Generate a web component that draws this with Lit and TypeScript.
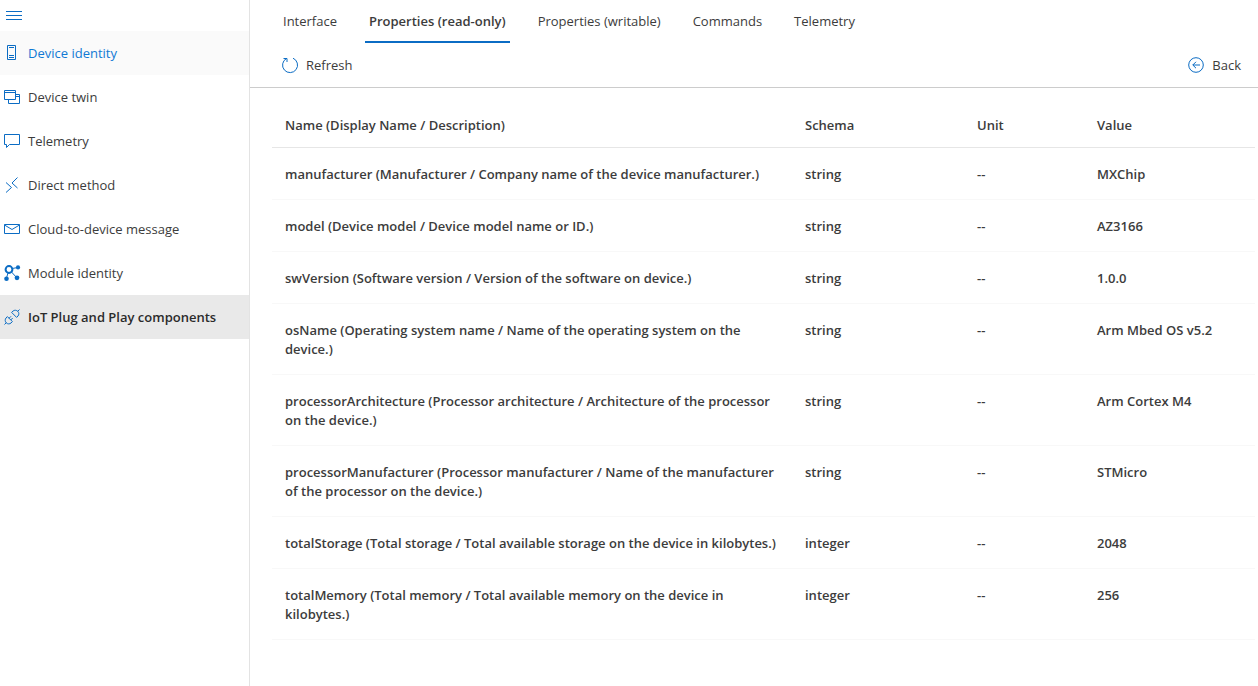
import { LitElement, html, css, svg, TemplateResult } from "lit";
import { customElement, property, state } from "lit/decorators.js";
import { classMap } from "lit/directives/class-map.js";

const icons: Record<string, TemplateResult> = {
  menu: svg`<path d="M0 3.5H16M0 7.5H16M0 11.5H16" />`,
  device: svg`<path d="M3.5 .5H11.5V14.5H3.5ZM5 2.5H10M5 10.5H10M5 12.5H10" />`,
  twin: svg`<path d="M.5 1.5H11.5V10.5H.5ZM.5 3.5H11.5M12 5.5H15.5V14.5H4.5V11M12 7.5H15.5" />`,
  chat: svg`<path d="M.5 1.5H15.5V11.5H5.5L2.5 14.5V11.5H.5Z" />`,
  method: svg`<path d="M2 5.5L7.5 10.5L2 15.5M13.5 .5L8 6L13.5 11" />`,
  mail: svg`<path d="M.5 3.5H15.5V12.5H.5ZM.5 4L8 8.5L15.5 4" />`,
  module: svg`<circle cx="5" cy="4.5" r="3.4" stroke-width="2" /><path d="M8 3.5L14 2.5M4 8L2.5 13M7.5 7L13 13" /><g class="solid"><circle cx="14" cy="2.4" r="2.1" /><circle cx="2.5" cy="13.7" r="2.3" /><circle cx="13" cy="12.8" r="2.4" /></g>`,
  plug: svg`<path d="M.5 15.5L2.3 13.7M3.4 7.6L8.4 12.6L7 14C5.7 15.2 3.6 15.2 2.3 13.9C.9 12.5 .9 10.4 2 9ZM5 9.3L7 7.3M6.7 11L8.7 9M15.5 .5L13.7 2.3M7.6 3.4L12.6 8.4L14 7C15.2 5.7 15.1 3.6 13.8 2.3C12.5 1 10.4 .9 9.1 2Z" />`,
  refresh: svg`<path d="M4.5 1.5A7.5 7.5 0 1 0 11 1.2M1.5 1.5H5V5" />`,
  back: svg`<circle cx="8" cy="8" r="7.3" /><path d="M12 8H4.8M8 4.8L4.8 8L8 11.2" />`,
};

@customElement("line-icon")
class LineIcon extends LitElement {
  @property() name = "menu";
  static styles = css`
    :host { display: block; flex: none; width: 16px; height: 16px; color: #0b6cc4; }
    svg { display: block; fill: none; stroke: currentColor; overflow: visible; }
    .solid { fill: currentColor; stroke: none; }
  `;
  render() {
    return html`<svg width="16" height="16" viewBox="0 0 16 16" aria-hidden="true">${icons[this.name]}</svg>`;
  }
}

const navItems = [
  ["device", "Device identity"],
  ["twin", "Device twin"],
  ["chat", "Telemetry"],
  ["method", "Direct method"],
  ["mail", "Cloud-to-device message"],
  ["module", "Module identity"],
  ["plug", "IoT Plug and Play components"],
];

const tabs = ["Interface", "Properties (read-only)", "Properties (writable)", "Commands", "Telemetry"];

const rows = [
  ["manufacturer (Manufacturer / Company name of the device manufacturer.)", "string", "--", "MXChip"],
  ["model (Device model / Device model name or ID.)", "string", "--", "AZ3166"],
  ["swVersion (Software version / Version of the software on device.)", "string", "--", "1.0.0"],
  ["osName (Operating system name / Name of the operating system on the device.)", "string", "--", "Arm Mbed OS v5.2"],
  ["processorArchitecture (Processor architecture / Architecture of the processor on the device.)", "string", "--", "Arm Cortex M4"],
  ["processorManufacturer (Processor manufacturer / Name of the manufacturer of the processor on the device.)", "string", "--", "STMicro"],
  ["totalStorage (Total storage / Total available storage on the device in kilobytes.)", "integer", "--", "2048"],
  ["totalMemory (Total memory / Total available memory on the device in kilobytes.)", "integer", "--", "256"],
];

@customElement("app-root")
class AppRoot extends LitElement {
  @state() private tab = 1;

  static styles = css`
    :host {
      display: flex;
      min-height: 100vh;
      background: #fff;
      color: #3c3c3c;
      font: 13px/19px "Open Sans", "Noto Sans", sans-serif;
    }
    * { box-sizing: border-box; }
    button { font: inherit; color: inherit; background: none; border: 0; padding: 0; cursor: pointer; }
    .side { flex: none; width: 250px; border-right: 1px solid #e3e3e3; }
    .menu { display: block; height: 31px; padding: 0 6px; }
    .link {
      display: flex;
      align-items: center;
      gap: 8px;
      height: 44px;
      padding: 0 4px;
      color: inherit;
      text-decoration: none;
    }
    .hover { background: #fafafa; color: #1079d4; }
    .current { background: #e9e9e9; color: #2b2b2b; font-weight: 600; }
    .main { flex: 1; min-width: 0; }
    .tabs { display: flex; gap: 24px; padding: 0 29px; }
    .tab { height: 43px; padding: 2px 4px 0; border-bottom: 2px solid transparent; }
    .selected { border-color: #0b6cc4; font-weight: 600; }
    .bar {
      display: flex;
      justify-content: space-between;
      height: 45px;
      padding: 0 17px 0 32px;
      border-bottom: 1px solid #ccc;
    }
    .command { display: flex; align-items: center; gap: 8px; }
    .content { padding: 15px 3px 0 22px; }
    table { width: 100%; table-layout: fixed; border-spacing: 0; }
    .name { width: 520px; }
    .schema { width: 172px; }
    .unit { width: 120px; }
    th { height: 45px; padding: 0 13px; text-align: left; font-weight: 600; border-bottom: 1px solid #e6e6e6; }
    td { padding: 17px 13px 15px; vertical-align: top; font-weight: 600; border-bottom: 1px solid #f8f8f8; }
  `;

  render() {
    return html`
      <nav class="side">
        <button class="menu" aria-label="Toggle navigation"><line-icon name="menu"></line-icon></button>
        ${navItems.map(
          ([icon, label], i) => html`
            <a href="#" class="link ${classMap({ hover: i === 0, current: i === 6 })}">
              <line-icon name=${icon}></line-icon>${label}
            </a>
          `
        )}
      </nav>
      <main class="main">
        <div class="tabs" role="tablist">
          ${tabs.map(
            (label, i) => html`
              <button
                role="tab"
                class="tab ${classMap({ selected: i === this.tab })}"
                aria-selected=${i === this.tab}
                @click=${() => (this.tab = i)}
              >${label}</button>
            `
          )}
        </div>
        <div class="bar">
          <button class="command"><line-icon name="refresh"></line-icon>Refresh</button>
          <button class="command"><line-icon name="back"></line-icon>Back</button>
        </div>
        <section class="content">
          <table>
            <colgroup><col class="name" /><col class="schema" /><col class="unit" /><col /></colgroup>
            <thead>
              <tr><th>Name (Display Name / Description)</th><th>Schema</th><th>Unit</th><th>Value</th></tr>
            </thead>
            <tbody>
              ${rows.map((row) => html`<tr>${row.map((cell) => html`<td>${cell}</td>`)}</tr>`)}
            </tbody>
          </table>
        </section>
      </main>
    `;
  }
}
